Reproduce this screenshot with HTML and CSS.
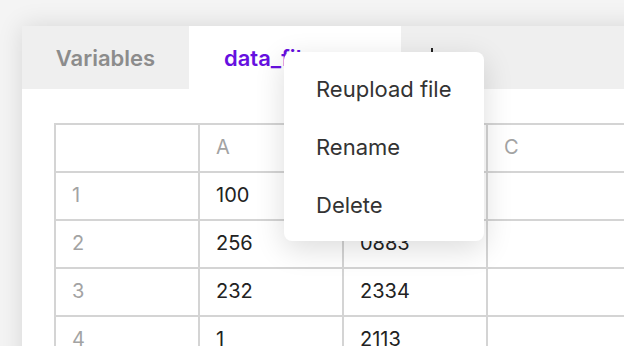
FILE: index.html
```html
<!DOCTYPE html>
<html lang="en">
<head>
  <meta charset="UTF-8">
  <meta name="viewport" content="width=device-width, initial-scale=1.0">
  <title>Data files</title>
  <link rel="stylesheet" href="styles.css">
</head>
<body>

<div class="panel">
  <div class="tabs">
    <div class="tab">Variables</div>
    <div class="tab active">data_file.csv</div>
    <div class="tab add"><span class="plus"></span></div>
  </div>

  <div class="content">
    <div class="sheet">
      <div class="cell head"></div>
      <div class="cell head">A</div>
      <div class="cell head">B</div>
      <div class="cell head">C</div>

      <div class="cell num">1</div>
      <div class="cell">100</div>
      <div class="cell">2313</div>
      <div class="cell"></div>

      <div class="cell num">2</div>
      <div class="cell">256</div>
      <div class="cell">0883</div>
      <div class="cell"></div>

      <div class="cell num">3</div>
      <div class="cell">232</div>
      <div class="cell">2334</div>
      <div class="cell"></div>

      <div class="cell num">4</div>
      <div class="cell">1</div>
      <div class="cell">2113</div>
      <div class="cell"></div>
    </div>
  </div>
</div>

<ul class="menu">
  <li>Reupload file</li>
  <li>Rename</li>
  <li>Delete</li>
</ul>

</body>
</html>
```

FILE: styles.css
```css
body {
  font-family: Inter, "Noto Sans", sans-serif;
  background-color: #f4f4f4;
  color: #222;
  margin: 0;
  padding: 0;
  overflow: hidden;
  height: 346px;
}
.panel {
  margin: 26px 0 0 22px;
  width: 720px;
  height: 400px;
  background-color: #fff;
  box-shadow: 0 0 24px rgba(0, 0, 0, 0.12);
}
.tabs {
  display: flex;
  height: 63px;
  background-color: #efefef;
}
.tab {
  display: flex;
  align-items: center;
  justify-content: center;
  width: 167px;
  font-size: 22px;
  font-weight: 600;
  color: #8c8c8c;
}
.tab.active {
  width: 212px;
  background-color: #fff;
  color: #6610e0;
  justify-content: flex-start;
  padding-left: 35px;
  box-sizing: border-box;
  white-space: nowrap;
  overflow: hidden;
}
.tab.add {
  width: auto;
  padding-left: 30px;
  align-items: flex-start;
  padding-top: 22px;
}
.plus {
  width: 2px;
  height: 16px;
  background-color: #222;
}
.content {
  padding: 34px 0 0 32px;
}
.sheet {
  display: grid;
  grid-template-columns: repeat(4, 142px);
  grid-auto-rows: 46px;
  gap: 2px;
  padding: 2px;
  width: max-content;
  background-color: #d4d4d4;
}
.cell {
  display: flex;
  align-items: center;
  padding: 0 0 3px 16px;
  background-color: #fff;
  font-size: 20px;
  color: #222;
}
.cell.head,
.cell.num {
  color: #a3a3a3;
}
.menu {
  position: absolute;
  left: 284px;
  top: 52px;
  width: 200px;
  margin: 0;
  padding: 8px 0 7px;
  list-style: none;
  background-color: #fff;
  border-radius: 8px;
  box-shadow: 0 8px 30px rgba(0, 0, 0, 0.14);
}
.menu li {
  display: flex;
  align-items: center;
  height: 58px;
  padding-left: 32px;
  font-size: 22px;
  color: #333;
}
```
